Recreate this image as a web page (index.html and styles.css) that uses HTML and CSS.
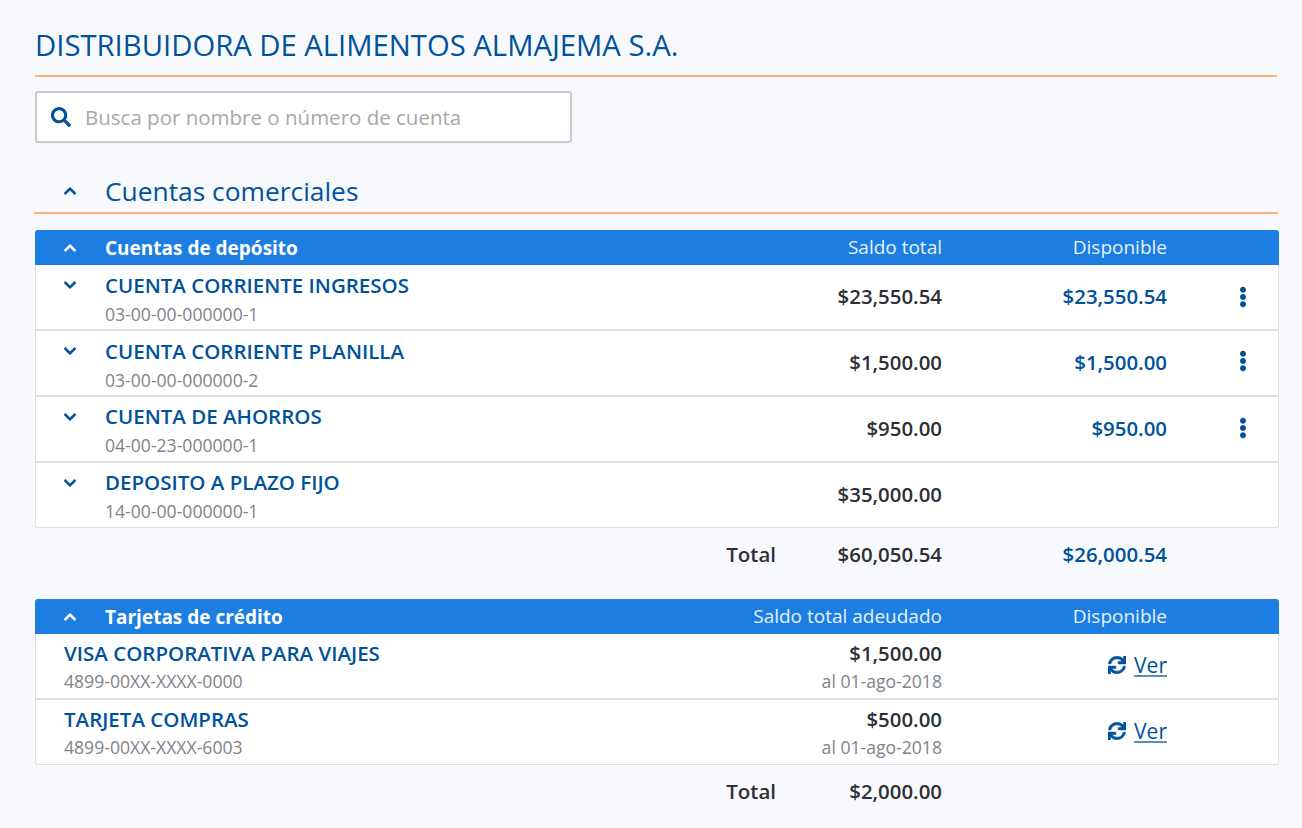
FILE: index.html
```html
<!DOCTYPE html>
<html lang="en">
<head>
    <meta charset="UTF-8">
    <title>Cuentas</title>
    <link rel="stylesheet" href="styles.css">
</head>
<body>
<svg class="icon-defs" xmlns="http://www.w3.org/2000/svg">
    <symbol id="i-search" viewBox="0 0 512 512"><path d="M505 442.7L405.3 343c-4.5-4.5-10.6-7-17-7H372c27.6-35.3 44-79.7 44-128C416 93.1 322.9 0 208 0S0 93.1 0 208s93.1 208 208 208c48.3 0 92.7-16.4 128-44v16.3c0 6.4 2.5 12.5 7 17l99.7 99.7c9.4 9.4 24.6 9.4 33.9 0l28.3-28.3c9.4-9.4 9.4-24.6.1-34zM208 336c-70.7 0-128-57.2-128-128 0-70.7 57.2-128 128-128 70.7 0 128 57.2 128 128 0 70.7-57.2 128-128 128z"/></symbol>
    <symbol id="i-up" viewBox="0 0 448 512"><path d="M240.971 130.524l194.343 194.343c9.373 9.373 9.373 24.569 0 33.941l-22.667 22.667c-9.357 9.357-24.522 9.375-33.901.04L224 227.495 69.255 381.516c-9.379 9.335-24.544 9.317-33.901-.04l-22.667-22.667c-9.373-9.373-9.373-24.569 0-33.941L207.03 130.525c9.372-9.373 24.568-9.373 33.941-.001z"/></symbol>
    <symbol id="i-down" viewBox="0 0 448 512"><path d="M207.029 381.476L12.686 187.132c-9.373-9.373-9.373-24.569 0-33.941l22.667-22.667c9.357-9.357 24.522-9.375 33.901-.04L224 284.505l154.745-154.021c9.379-9.335 24.544-9.317 33.901.04l22.667 22.667c9.373 9.373 9.373 24.569 0 33.941L240.971 381.476c-9.373 9.372-24.569 9.372-33.942 0z"/></symbol>
    <symbol id="i-more" viewBox="0 0 192 512"><path d="M96 184c39.8 0 72 32.2 72 72s-32.2 72-72 72-72-32.2-72-72 32.2-72 72-72zM24 80c0 39.8 32.2 72 72 72s72-32.2 72-72S135.8 8 96 8 24 40.2 24 80zm0 352c0 39.8 32.2 72 72 72s72-32.2 72-72-32.2-72-72-72-72 32.2-72 72z"/></symbol>
    <symbol id="i-sync" viewBox="0 0 512 512"><path d="M440.65 12.57l4 82.77A247.16 247.16 0 0 0 255.83 8C134.73 8 33.91 94.92 12.29 209.82A12 12 0 0 0 24.09 224h49.05a12 12 0 0 0 11.67-9.26 175.91 175.91 0 0 1 317-56.94l-101.46-4.86a12 12 0 0 0-12.57 12v47.41a12 12 0 0 0 12 12H500a12 12 0 0 0 12-12V12a12 12 0 0 0-12-12h-47.37a12 12 0 0 0-11.98 12.57zM255.83 432a175.61 175.61 0 0 1-146-77.8l101.8 4.87a12 12 0 0 0 12.57-12v-47.4a12 12 0 0 0-12-12H12a12 12 0 0 0-12 12V500a12 12 0 0 0 12 12h47.35a12 12 0 0 0 12-12.6l-4.15-82.57A247.17 247.17 0 0 0 255.83 504c121.11 0 221.93-86.92 243.55-201.82a12 12 0 0 0-11.8-14.18h-49.05a12 12 0 0 0-11.67 9.26A175.86 175.86 0 0 1 255.83 432z"/></symbol>
</svg>

<h1 class="company-title">DISTRIBUIDORA DE ALIMENTOS ALMAJEMA S.A.</h1>

<div class="search-box">
    <svg class="search-icon"><use href="#i-search"></use></svg>
    <span class="search-placeholder">Busca por nombre o número de cuenta</span>
</div>

<div class="section-title">
    <span class="chevron-cell"><svg class="chevron"><use href="#i-up"></use></svg></span>
    <h2>Cuentas comerciales</h2>
</div>

<!-- cuentas de deposito -->
<div class="table-head">
    <span class="chevron-cell"><svg class="chevron"><use href="#i-up"></use></svg></span>
    <span class="table-head__name">Cuentas de depósito</span>
    <span class="table-head__col">Saldo total</span>
    <span class="table-head__col">Disponible</span>
</div>
<div class="table-body">
    <div class="account-row">
        <span class="chevron-cell chevron-cell--row"><svg class="chevron"><use href="#i-down"></use></svg></span>
        <div class="account-info"><div class="account-name">CUENTA CORRIENTE INGRESOS</div><div class="account-number">03-00-00-000000-1</div></div>
        <div class="amount">$23,550.54</div>
        <div class="amount amount--available">$23,550.54</div>
        <svg class="more-icon"><use href="#i-more"></use></svg>
    </div>
    <div class="account-row">
        <span class="chevron-cell chevron-cell--row"><svg class="chevron"><use href="#i-down"></use></svg></span>
        <div class="account-info"><div class="account-name">CUENTA CORRIENTE PLANILLA</div><div class="account-number">03-00-00-000000-2</div></div>
        <div class="amount">$1,500.00</div>
        <div class="amount amount--available">$1,500.00</div>
        <svg class="more-icon more-icon--second"><use href="#i-more"></use></svg>
    </div>
    <div class="account-row">
        <span class="chevron-cell chevron-cell--row"><svg class="chevron"><use href="#i-down"></use></svg></span>
        <div class="account-info"><div class="account-name">CUENTA DE AHORROS</div><div class="account-number">04-00-23-000000-1</div></div>
        <div class="amount">$950.00</div>
        <div class="amount amount--available">$950.00</div>
        <svg class="more-icon more-icon--third"><use href="#i-more"></use></svg>
    </div>
    <div class="account-row">
        <span class="chevron-cell chevron-cell--row"><svg class="chevron"><use href="#i-down"></use></svg></span>
        <div class="account-info"><div class="account-name">DEPOSITO A PLAZO FIJO</div><div class="account-number">14-00-00-000000-1</div></div>
        <div class="amount">$35,000.00</div>
    </div>
</div>
<div class="total-row">
    <span class="total-label">Total</span>
    <span class="amount">$60,050.54</span>
    <span class="amount amount--available">$26,000.54</span>
</div>

<!-- tarjetas -->
<div class="table-head">
    <span class="chevron-cell"><svg class="chevron"><use href="#i-up"></use></svg></span>
    <span class="table-head__name">Tarjetas de crédito</span>
    <span class="table-head__col">Saldo total adeudado</span>
    <span class="table-head__col">Disponible</span>
</div>
<div class="table-body">
    <div class="card-row">
        <div class="card-info"><div class="account-name">VISA CORPORATIVA PARA VIAJES</div><div class="account-number account-number--card">4899-00XX-XXXX-0000</div></div>
        <div class="card-info"><div class="amount">$1,500.00</div><div class="balance-date">al 01-ago-2018</div></div>
        <div class="card-action"><svg class="sync-icon"><use href="#i-sync"></use></svg><a class="see-link" href="#">Ver</a></div>
    </div>
    <div class="card-row">
        <div class="card-info"><div class="account-name">TARJETA COMPRAS</div><div class="account-number account-number--card">4899-00XX-XXXX-6003</div></div>
        <div class="card-info"><div class="amount">$500.00</div><div class="balance-date">al 01-ago-2018</div></div>
        <div class="card-action"><svg class="sync-icon"><use href="#i-sync"></use></svg><a class="see-link" href="#">Ver</a></div>
    </div>
</div>
<div class="total-row total-row--last">
    <span class="total-label">Total</span>
    <span class="amount">$2,000.00</span>
</div>
</body>
</html>
```

FILE: styles.css
```css
* {
    box-sizing: border-box;
}

body {
    margin: 0;
    padding: 26px 23px 0 35px;
    height: 828px;
    overflow: hidden;
    background-color: #f7f9fd;
    font-family: "Open Sans", "Noto Sans", sans-serif;
    color: #2e3033;
}

.icon-defs {
    display: none;
}

/* titulo */
.company-title {
    margin: 0 2px 0 0;
    height: 51px;
    padding: 1px 0 11px;
    border-bottom: 2px solid #f8b27a;
    font-size: 29.25px;
    line-height: 37px;
    font-weight: 400;
    color: #00529b;
}

/* buscador */
.search-box {
    display: flex;
    align-items: center;
    width: 537px;
    height: 52px;
    margin-top: 14px;
    padding-left: 14px;
    background-color: #fff;
    border: 2px solid #c8ccd1;
    border-radius: 3px;
}

.search-icon {
    width: 20px;
    height: 20px;
    fill: #00529b;
}

.search-placeholder {
    margin-left: 14px;
    font-size: 20.5px;
    color: #a6a8ab;
}

/* seccion */
.section-title {
    display: flex;
    align-items: center;
    height: 51px;
    margin: 20px 1px 0 -1px;
    padding: 6px 0 0 1px;
    border-bottom: 2px solid #f8b27a;
}

.section-title h2 {
    margin: 0;
    font-size: 26.35px;
    font-weight: 400;
    color: #00529b;
}

.chevron-cell {
    flex: none;
    display: flex;
    justify-content: center;
    width: 70px;
}

.chevron {
    width: 12px;
    height: 14px;
    fill: #00529b;
    stroke: #00529b;
    stroke-width: 24px;
}

/* tablas */
.table-head {
    display: grid;
    grid-template-columns: 70px 1fr auto 225px 112px;
    align-items: center;
    height: 35px;
    margin-top: 16px;
    background-color: #1d7ee2;
    border-radius: 3px 3px 0 0;
    color: #fff;
    font-size: 19px;
}

.table-head .chevron {
    fill: #fff;
    stroke: #fff;
}

.table-head__name {
    font-weight: 700;
}

.table-head__col {
    padding-bottom: 1px;
    text-align: right;
    color: #e6f0fb;
}

.table-body {
    background-color: #fff;
    border: 1px solid #dcdfe5;
    border-top: none;
    border-radius: 0 0 3px 3px;
}

.account-row,
.card-row {
    display: grid;
    height: 66px;
    align-items: center;
    border-bottom: 2px solid #dcdfe5;
}

.account-row:last-child,
.card-row:last-child {
    height: 64px;
    border-bottom: none;
}

.account-row {
    grid-template-columns: 69px 1fr auto 225px 111px;
}

.account-row > .amount {
    padding-bottom: 2px;
}

.card-row {
    grid-template-columns: 1fr auto 225px 111px;
    padding-left: 28px;
}

.chevron-cell--row {
    align-self: start;
    width: 68px;
    padding-top: 13px;
}

.account-info {
    padding-top: 2px;
}

/* las dos ultimas filas van un pixel mas arriba */
.account-row:nth-child(n+3) .account-info {
    padding-top: 0;
}

.card-info {
    padding-bottom: 1px;
}

.account-name {
    font-size: 20.5px;
    line-height: 28px;
    font-weight: 600;
    color: #00529b;
}

.account-number {
    font-size: 17.6px;
    line-height: 24px;
    margin-top: 3px;
    color: #808389;
}

.account-number--card {
    margin-top: 2px;
}

.amount {
    font-size: 20.4px;
    font-weight: 600;
    line-height: 28px;
    text-align: right;
}

.amount--available {
    color: #00529b;
}

.more-icon {
    justify-self: start;
    width: 8px;
    height: 22px;
    margin-left: 72px;
    fill: #00529b;
}

.more-icon--second {
    margin-bottom: 4px;
}

.more-icon--third {
    margin-bottom: 2px;
}

.balance-date {
    font-size: 17.6px;
    line-height: 24px;
    margin-top: 2px;
    text-align: right;
    color: #808389;
}

.card-action {
    display: flex;
    justify-content: flex-end;
    align-items: center;
    gap: 8px;
    padding-bottom: 2px;
}

.sync-icon {
    width: 18px;
    height: 18px;
    fill: #00529b;
    stroke: #00529b;
    stroke-width: 16px;
}

.see-link {
    font-size: 21px;
    font-weight: 500;
    color: #00529b;
    text-decoration-color: #5b8fc4;
}

/* totales */
.total-row {
    display: grid;
    grid-template-columns: 1fr 166px 225px 112px;
    align-items: center;
    height: 55px;
    padding-bottom: 3px;
}

.total-row--last {
    height: 54px;
}

.total-label {
    font-size: 20.5px;
    font-weight: 600;
    text-align: right;
}
```
